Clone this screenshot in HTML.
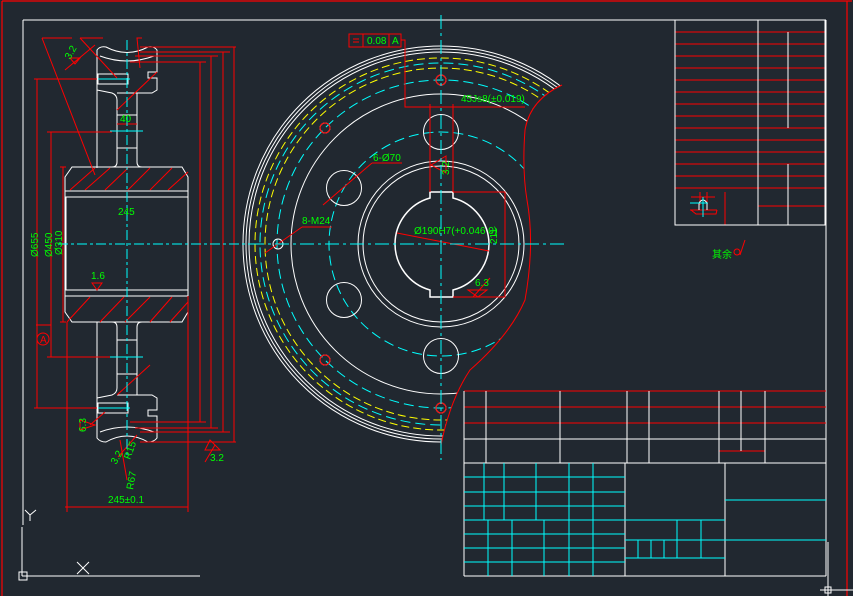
<!DOCTYPE html>
<html><head><meta charset="utf-8"><style>
html,body{margin:0;padding:0;background:#212830;}
svg{display:block}
text{font-family:"Liberation Sans","Noto Sans CJK SC",sans-serif;fill:#00ff00;font-size:10px}
</style></head><body>
<svg width="853" height="596" viewBox="0 0 853 596" xmlns="http://www.w3.org/2000/svg">
<rect width="853" height="596" fill="#212830"/>
<!-- outer red frame -->
<g stroke="#ff0000" fill="none" stroke-width="1.2">
<line x1="2" y1="1" x2="852" y2="1"/>
<line x1="2" y1="1" x2="2" y2="596"/>
<line x1="847" y1="1" x2="847" y2="596"/>
</g>
<!-- inner white frame -->
<g stroke="#ffffff" fill="none" stroke-width="1">
<line x1="23" y1="20" x2="826" y2="20"/>
<line x1="23" y1="20" x2="23" y2="525"/>
<line x1="826" y1="20" x2="826" y2="576"/>
<line x1="464" y1="576" x2="826" y2="576"/>
<!-- UCS -->
<line x1="22" y1="527" x2="22" y2="576"/>
<line x1="22" y1="576" x2="200" y2="576"/>
<rect x="19" y="572" width="8" height="8"/>
<line x1="77" y1="562" x2="89" y2="574"/><line x1="89" y1="562" x2="77" y2="574"/>
<line x1="25" y1="510" x2="30" y2="515"/><line x1="36" y1="510" x2="30" y2="515"/><line x1="30" y1="515" x2="30" y2="521"/>
<line x1="820" y1="590" x2="853" y2="590"/><line x1="828" y1="542" x2="828" y2="596"/>
<rect x="825" y="587" width="6" height="6"/>
</g>

<!-- ===== TOP RIGHT TABLE ===== -->
<g stroke="#ff0000" stroke-width="1">
<line x1="675" y1="32" x2="825" y2="32"/><line x1="675" y1="44" x2="825" y2="44"/><line x1="675" y1="56" x2="825" y2="56"/><line x1="675" y1="68" x2="825" y2="68"/><line x1="675" y1="80" x2="825" y2="80"/><line x1="675" y1="92" x2="825" y2="92"/><line x1="675" y1="104" x2="825" y2="104"/><line x1="675" y1="116" x2="825" y2="116"/><line x1="675" y1="128" x2="825" y2="128"/><line x1="675" y1="140" x2="825" y2="140"/><line x1="675" y1="152" x2="825" y2="152"/><line x1="675" y1="164" x2="825" y2="164"/><line x1="675" y1="176" x2="825" y2="176"/><line x1="675" y1="188" x2="825" y2="188"/>
<line x1="758" y1="206" x2="825" y2="206"/>
<line x1="725" y1="192" x2="725" y2="225"/>
<path d="M691 197 H715 M690 210 H717 M700 192 V205 M707 192 V205" />
<path d="M691 210 L696 214 H716 L717 210" fill="none"/>
<line x1="740" y1="255" x2="745" y2="240"/><circle cx="737" cy="252" r="3" fill="none"/>
</g>
<g stroke="#ffffff" stroke-width="1" fill="none">
<rect x="675" y="20" width="150" height="205"/>
<line x1="758" y1="20" x2="758" y2="225"/>
<line x1="788" y1="32" x2="788" y2="128"/>
<line x1="788" y1="164" x2="788" y2="225"/>
<path d="M699 210 V203 Q703 197 707 203 V210"/>
</g>
<line x1="690" y1="203" x2="708" y2="203" stroke="#00ffff"/><line x1="703" y1="197" x2="703" y2="217" stroke="#00ffff"/>
<text x="712" y="258" font-size="9">其余</text>

<!-- ===== BOTTOM TITLE BLOCK ===== -->
<g stroke="#ff0000" stroke-width="1">
<line x1="464" y1="391" x2="826" y2="391"/><line x1="464" y1="407" x2="826" y2="407"/><line x1="464" y1="423" x2="826" y2="423"/>
<line x1="719" y1="451" x2="765" y2="451"/>
</g>
<g stroke="#ffffff" stroke-width="1">
<line x1="464" y1="439" x2="826" y2="439"/><line x1="464" y1="463" x2="826" y2="463"/>
<line x1="464" y1="391" x2="464" y2="576"/>
<line x1="486" y1="391" x2="486" y2="463"/><line x1="560" y1="391" x2="560" y2="463"/><line x1="627" y1="391" x2="627" y2="463"/><line x1="649" y1="391" x2="649" y2="463"/><line x1="719" y1="391" x2="719" y2="463"/><line x1="741" y1="391" x2="741" y2="451"/><line x1="765" y1="391" x2="765" y2="463"/>
<line x1="625" y1="463" x2="625" y2="576"/><line x1="725" y1="463" x2="725" y2="576"/>
</g>
<g stroke="#00ffff" stroke-width="1">
<line x1="464" y1="477" x2="625" y2="477"/><line x1="464" y1="492" x2="625" y2="492"/><line x1="464" y1="506" x2="625" y2="506"/><line x1="464" y1="520" x2="625" y2="520"/><line x1="464" y1="534" x2="625" y2="534"/><line x1="464" y1="548" x2="625" y2="548"/><line x1="464" y1="562" x2="625" y2="562"/>
<line x1="484" y1="463" x2="484" y2="520"/><line x1="504" y1="463" x2="504" y2="520"/><line x1="536" y1="463" x2="536" y2="520"/>
<line x1="488" y1="520" x2="488" y2="576"/><line x1="512" y1="520" x2="512" y2="576"/><line x1="544" y1="520" x2="544" y2="576"/>
<line x1="569" y1="463" x2="569" y2="576"/><line x1="593" y1="463" x2="593" y2="576"/>
<line x1="725" y1="500" x2="826" y2="500"/>
<line x1="625" y1="520" x2="725" y2="520"/><line x1="625" y1="540" x2="826" y2="540"/><line x1="625" y1="558" x2="725" y2="558"/>
<line x1="638" y1="540" x2="638" y2="558"/><line x1="651" y1="540" x2="651" y2="558"/><line x1="664" y1="540" x2="664" y2="558"/>
<line x1="677" y1="520" x2="677" y2="558"/><line x1="701" y1="520" x2="701" y2="558"/>
</g>

<!-- ===== FRONT VIEW (circle) ===== -->
<defs><clipPath id="cl"><path d="M441 40 L600 40 L562 85 Q530 100 525 130 Q522 170 527 200 Q535 244 525 300 Q510 335 470 370 Q450 400 441 445 L200 445 L200 40 Z"/></clipPath></defs>
<g clip-path="url(#cl)" fill="none" stroke-width="1">
<g stroke="#ffffff"><circle cx="441" cy="244" r="198"/><circle cx="441" cy="244" r="195"/><circle cx="441" cy="244" r="192"/><circle cx="441" cy="244" r="150"/></g>
<g stroke="#ffff00" stroke-dasharray="8 4"><circle cx="441" cy="244" r="186"/><circle cx="441" cy="244" r="176"/></g>
<g stroke="#00ffff" stroke-dasharray="10 5"><circle cx="441" cy="244" r="181"/><circle cx="441" cy="244" r="164"/><circle cx="441" cy="244" r="112"/></g>
</g>
<path d="M562 85 Q530 100 525 130 Q522 170 527 200 Q535 244 525 300 Q510 335 470 370 Q450 400 441 445" stroke="#ff0000" fill="none"/>
<g stroke="#ffffff" fill="none">
<circle cx="441" cy="244" r="83"/><circle cx="441" cy="244" r="78"/>
<path d="M430 192 V198 A48 48 0 0 0 395 244 A48 48 0 0 0 430 290 V297 H453 V290 A48 48 0 0 0 489 244 A48 48 0 0 0 453 198 V192 Z" stroke-width="1.5"/>
<circle cx="441" cy="132" r="17.5"/><circle cx="441" cy="356" r="17.5"/>
<circle cx="344" cy="188" r="17.5"/><circle cx="344" cy="300" r="17.5"/>
<circle cx="441" cy="80" r="5"/><circle cx="441" cy="408" r="5"/><circle cx="278" cy="244" r="5"/><circle cx="325" cy="128" r="5"/><circle cx="325" cy="360" r="5"/>
</g>
<g stroke="#ff0000" fill="none">
<circle cx="441" cy="80" r="5"/><circle cx="441" cy="408" r="5"/><circle cx="325" cy="128" r="5"/><circle cx="325" cy="360" r="5"/>
<rect x="349" y="34" width="14" height="13"/><rect x="363" y="34" width="26" height="13"/><rect x="389" y="34" width="12" height="13"/>
<path d="M353 39 H359 M353 42 H359"/>
<path d="M401 40 H405 V107 H525"/>
<path d="M430 104 V192 M453 104 V192"/>
<path d="M453 192 H505 V297 H453"/>
<path d="M372 163 H402 M372 163 L323 205"/>
<path d="M302 227 H332 M302 227 L265 253"/>
<path d="M397 233 L489 251"/>
<path d="M473 297 L490 278 M468 290 H487 L478 297 Z"/>
<path d="M446 156 L431 165 L446 173 Z"/>
</g>
<g stroke="#00ffff" stroke-dasharray="14 4 3 4" fill="none">
<line x1="441" y1="15" x2="441" y2="460"/><line x1="250" y1="244" x2="568" y2="244"/>
</g>
<text x="367" y="44" font-size="9">0.08</text><text x="392" y="44" font-size="9">A</text>
<text x="461" y="102" font-size="9">45Js8(±0.019)</text>
<text x="373" y="161" font-size="9">6-Ø70</text>
<text x="302" y="224" font-size="9">8-M24</text>
<text x="414" y="234" font-size="8">Ø190H7(+0.046 0)</text>
<text x="475" y="286" font-size="9">6.3</text>
<text transform="translate(497,244) rotate(-90)" font-size="9">211</text>
<text transform="translate(449,175) rotate(-90)" font-size="8">3.2</text>

<!-- ===== SIDE VIEW ===== -->
<g stroke="#ffffff" fill="none" stroke-width="1">
<path d="M97 168 V50 Q100 46 106 47 Q127 58 148 47 Q154 46 157 50 V72 L148 72 V78 L157 78 V90 L152 93 H137 V162 Q137 167 142 167"/>
<path d="M97 90 L112 93 Q117 95 117 100 V162 Q117 167 112 167"/>
<path d="M117 93 H137 M117 115 H137 M117 148 H137"/>
<path d="M100 56 Q127 66 154 56"/>
<rect x="98" y="74" width="30" height="10"/>
<path d="M65 177 L72 167 H182 L188 177 V312 L182 322 H72 L65 312 Z"/>
<line x1="65" y1="191" x2="188" y2="191"/><line x1="65" y1="296" x2="188" y2="296"/>
<rect x="66" y="197" width="122" height="93"/>
<path d="M97 322 V438 Q100 442 106 442 Q127 430 148 442 Q154 442 157 438 V416 L148 416 V410 L157 410 V398 L152 395 H137 V327 Q137 322 142 322"/>
<path d="M97 398 L112 395 Q117 393 117 388 V327 Q117 322 112 322"/>
<path d="M117 395 H137 M117 374 H137 M117 340 H137"/>
<path d="M100 432 Q127 422 154 432"/>
<rect x="98" y="403" width="30" height="10"/>
</g>
<g stroke="#ff0000" fill="none" stroke-width="1">
<path d="M70 190 L95 168 M85 190 L110 168 M105 190 L128 168 M128 190 L150 168 M150 190 L172 168 M168 190 L188 172"/>
<path d="M67 322 L90 297 M100 322 L124 297 M125 322 L150 297 M150 322 L172 297 M170 322 L188 302"/>
<path d="M117 110 L157 72 M117 395 L150 365"/>
<path d="M34 79 H97 M37 79 V408 M34 408 H97"/>
<path d="M47 132 H112 M51 132 V357 M47 357 H112"/>
<path d="M60 167 H66 M63 167 V322 M60 322 H66"/>
<path d="M140 47 H236 M234 47 V442 M140 442 H236"/>
<path d="M140 52 H230 M223 52 V432 M140 432 H230"/>
<path d="M135 56 H218 M211 56 V428 M135 428 H218"/>
<path d="M130 62 H206 M200 62 V422 M130 422 H206"/>
<path d="M67 322 V512 M188 296 V512 M65 507 H188"/>
<path d="M117 124 H137"/>
<path d="M42 38 H68 M42 38 L95 175 M50 38 H72 M80 38 H103 M80 38 L117 78 M142 38 H137 L140 68"/>
<path d="M65 70 L95 45 M70 58 H80 L75 64 Z"/>
<path d="M90 425 L105 412 M80 420 L95 425 L80 430 Z"/>
<path d="M118 457 L137 435 M127 480 L120 440 M215 445 L205 462 M210 440 L220 450 H205 Z"/>
<path d="M36 325 H51"/><circle cx="43" cy="339" r="6"/>
<path d="M92 283 L97 290 L102 283 Z"/>
</g>
<g stroke="#00ffff" stroke-dasharray="10 3 3 3" fill="none">
<line x1="127" y1="40" x2="127" y2="455"/><line x1="58" y1="244" x2="250" y2="244"/>
</g>
<line x1="98" y1="79" x2="130" y2="79" stroke="#00ffff"/><line x1="98" y1="408" x2="130" y2="408" stroke="#00ffff"/>
<line x1="110" y1="131" x2="143" y2="131" stroke="#00ffff"/><line x1="110" y1="357" x2="143" y2="357" stroke="#00ffff"/>
<text x="120" y="122" font-size="10">40</text>
<text x="118" y="215" font-size="10">245</text>
<text x="91" y="279" font-size="9">1.6</text>
<text x="40" y="343" font-size="8" fill="#ff0000" style="fill:#ff0000">A</text>
<text x="108" y="503" font-size="10">245±0.1</text>
<text x="210" y="461" font-size="9">3.2</text>
<text transform="translate(38,257) rotate(-90)" font-size="9">Ø655</text>
<text transform="translate(52,257) rotate(-90)" font-size="9">Ø450</text>
<text transform="translate(62,255) rotate(-90)" font-size="8">Ø310</text>
<text transform="translate(86,432) rotate(-90)" font-size="9">6.3</text>
<text transform="translate(70,60) rotate(-60)" font-size="9">3.2</text>
<text transform="translate(116,465) rotate(-60)" font-size="9">3.2</text>
<text transform="translate(130,460) rotate(-70)" font-size="9">R15</text>
<text transform="translate(133,490) rotate(-80)" font-size="9">R67</text>
</svg>
</body></html>
